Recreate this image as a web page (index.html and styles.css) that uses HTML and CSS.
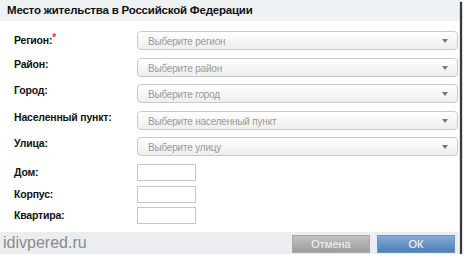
FILE: index.html
```html
<!DOCTYPE html>
<html lang="ru">
<head>
    <meta charset="UTF-8">
    <title>Место жительства в Российской Федерации</title>
    <link rel="stylesheet" href="styles.css">
</head>
<body>
    <div class="dialog">
        <div class="dialog-title">Место жительства в Российской Федерации</div>
        <div class="form">
            <div class="row">
                <label>Регион:<span class="req">*</span></label>
                <div class="select">Выберите регион<span class="arrow"></span></div>
            </div>
            <div class="row">
                <label>Район:</label>
                <div class="select">Выберите район<span class="arrow"></span></div>
            </div>
            <div class="row">
                <label>Город:</label>
                <div class="select">Выберите город<span class="arrow"></span></div>
            </div>
            <div class="row">
                <label>Населенный пункт:</label>
                <div class="select">Выберите населенный пункт<span class="arrow"></span></div>
            </div>
            <div class="row">
                <label>Улица:</label>
                <div class="select">Выберите улицу<span class="arrow"></span></div>
            </div>
            <div class="row small first">
                <label>Дом:</label>
                <input class="field" type="text">
            </div>
            <div class="row small">
                <label>Корпус:</label>
                <input class="field" type="text">
            </div>
            <div class="row small">
                <label>Квартира:</label>
                <input class="field" type="text">
            </div>
        </div>
        <div class="footer">
            <span class="site">idivpered.ru</span>
            <button class="btn btn-cancel">Отмена</button>
            <button class="btn btn-ok">ОК</button>
        </div>
    </div>
</body>
</html>
```

FILE: styles.css
```css
body {
    margin: 0;
    background: #fff;
    font-family: "Liberation Sans", Arial, sans-serif;
}
.dialog {
    width: 460px;
    height: 254px;
    background: #fff;
    border-right: 1px solid #d8dde2;
    box-shadow: 2px 2px 1px #3a3a3a;
    display: flex;
    flex-direction: column;
    box-sizing: border-box;
}
.dialog-title {
    height: 21px;
    background: #eef2f5;
    padding-left: 7px;
    font-size: 11.5px;
    font-weight: bold;
    line-height: 21px;
    color: #111;
    letter-spacing: -0.2px;
}
.form {
    flex: 1;
    padding: 10px 0 0 14px;
}
.row {
    display: flex;
    align-items: flex-start;
    height: 19px;
    margin-bottom: 7.5px;
}
.row label {
    width: 123px;
    font-size: 10.5px;
    font-weight: bold;
    color: #111;
    line-height: 13px;
    letter-spacing: -0.2px;
}
.req {
    color: #e0303a;
    vertical-align: 3px;
    font-size: 10px;
}
.select {
    position: relative;
    width: 321px;
    height: 19px;
    box-sizing: border-box;
    border: 1px solid #c9c9c9;
    border-radius: 4px;
    background: linear-gradient(#ffffff, #eeeeee);
    color: #9a9a9a;
    font-size: 10px;
    line-height: 19px;
    padding-left: 10px;
    letter-spacing: -0.2px;
}
.arrow {
    position: absolute;
    right: 9px;
    top: 7px;
    border-left: 3px solid transparent;
    border-right: 3px solid transparent;
    border-top: 4px solid #777;
}
.row.small {
    height: 17px;
    margin-bottom: 4px;
}
.row.small.first {
    margin-top: 0.5px;
    margin-bottom: 5px;
}
.row.small label {
    line-height: 17px;
}
.field {
    width: 59px;
    height: 17px;
    margin: 0;
    box-sizing: border-box;
    border: 1px solid #c6c6c6;
    background: #fff;
    padding: 0;
}
.footer {
    height: 22px;
    background: #eaeef1;
    display: flex;
    align-items: center;
    padding: 0 4px 0 3px;
}
.site {
    flex: 1;
    font-family: "Liberation Sans", Arial, sans-serif;
    font-size: 16px;
    color: #8a8a8a;
    line-height: 22px;
}
.btn {
    height: 18px;
    width: 78px;
    border: none;
    margin: 2px 0 0 7px;
    font-family: "Liberation Sans", Arial, sans-serif;
    font-size: 11px;
    padding: 0;
}
.btn-cancel {
    background: linear-gradient(#c2c2c2, #9c9c9c);
    border: 1px solid #a8a8a8;
    color: #f4f4f4;
}
.btn-ok {
    background: linear-gradient(#86acd6, #4d7fb8);
    border: 1px solid #6a94c4;
    color: #fff;
}
```
